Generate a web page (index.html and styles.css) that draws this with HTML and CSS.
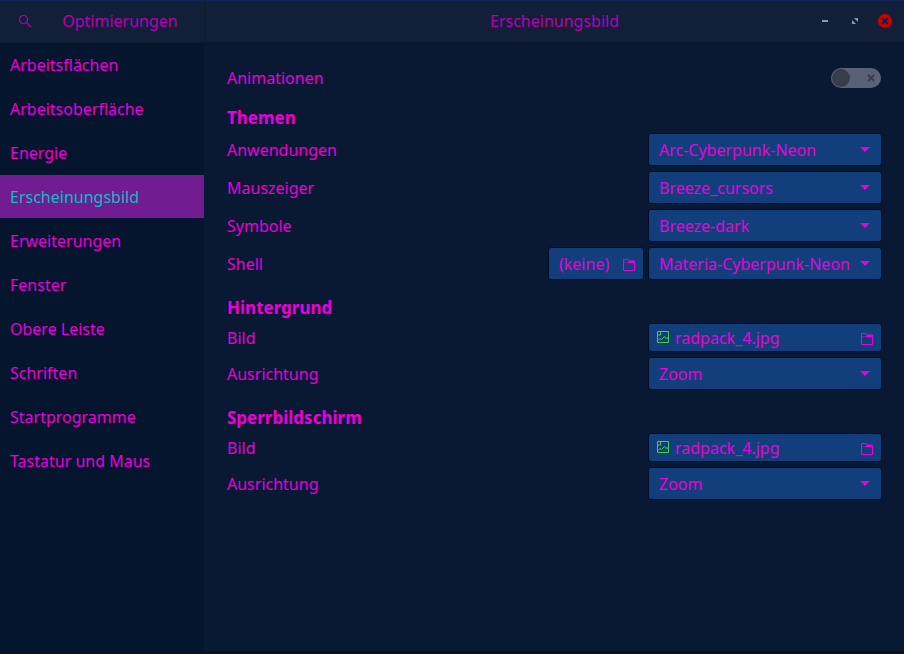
FILE: index.html
```html
<!DOCTYPE html>
<html lang="de">
<head>
    <meta charset="UTF-8">
    <meta name="viewport" content="width=device-width, initial-scale=1.0">
    <title>Optimierungen</title>
    <link rel="stylesheet" href="styles.css">
</head>
<body>
    <!-- Shared icons -->
    <svg class="sprite" aria-hidden="true">
        <symbol id="icon-folder" viewBox="0 0 12 12">
            <path d="M.5 .5H5.2L6.7 2H11.5V11.5H.5Z" fill="none" stroke="currentColor"/>
            <path d="M1 3.5H4.5L6 2H11V4H1Z" fill="currentColor"/>
        </symbol>
        <symbol id="icon-image" viewBox="0 0 12 12">
            <path d="M.5 .5H11.5V11.5H.5Z" fill="none" stroke="currentColor"/>
            <path d="M1 4H3.5V1M1 9.5L3 7.5L4.5 8.5L7.5 5.5L9 7.5L10 6.5L11 8" fill="none" stroke="currentColor"/>
        </symbol>
        <symbol id="icon-arrow" viewBox="0 0 10 5">
            <path d="M0 0H10L5 5Z" fill="currentColor"/>
        </symbol>
    </svg>

    <div class="window">
        <header class="titlebar">
            <div class="titlebar-left">
                <button class="search-button" aria-label="Suchen">
                    <svg width="14" height="14" viewBox="0 0 14 14"><circle cx="5.5" cy="5.5" r="4" fill="none" stroke="currentColor" stroke-width="1.2"/><path d="M8.500 8.500L13 13" fill="none" stroke="currentColor" stroke-width="1.3"/></svg>
                </button>
                <h1 class="title app-title">Optimierungen</h1>
            </div>
            <div class="titlebar-main">
                <h2 class="title">Erscheinungsbild</h2>
                <div class="window-controls">
                    <button aria-label="Minimieren">
                        <svg width="14" height="14" viewBox="0 0 14 14"><path d="M4 6H10V8H4Z" fill="currentColor"/></svg>
                    </button>
                    <button aria-label="Maximieren">
                        <svg width="14" height="14" viewBox="0 0 14 14"><path d="M6 4H10V8ZM4 6L8 10H4Z" fill="currentColor"/></svg>
                    </button>
                    <button class="close" aria-label="Schließen">
                        <svg width="14" height="14" viewBox="0 0 14 14"><path d="M4 4L10 10M10 4L4 10" fill="none" stroke="currentColor" stroke-width="1.8"/></svg>
                    </button>
                </div>
            </div>
        </header>

        <div class="body">
            <nav class="sidebar">
                <a href="#">Arbeitsflächen</a>
                <a href="#">Arbeitsoberfläche</a>
                <a href="#">Energie</a>
                <a href="#" class="active">Erscheinungsbild</a>
                <a href="#">Erweiterungen</a>
                <a href="#">Fenster</a>
                <a href="#">Obere Leiste</a>
                <a href="#">Schriften</a>
                <a href="#">Startprogramme</a>
                <a href="#">Tastatur und Maus</a>
            </nav>

            <main class="content">
                <div class="row">
                    <label for="animations">Animationen</label>
                    <span class="switch">
                        <input type="checkbox" id="animations" role="switch">
                        <svg width="8" height="8" viewBox="0 0 8 8"><path d="M1 1L7 7M7 1L1 7" fill="none" stroke="currentColor" stroke-width="1.8"/></svg>
                    </span>
                </div>

                <h3>Themen</h3>
                <div class="row">
                    <label for="applications">Anwendungen</label>
                    <div class="dropdown">
                        <select id="applications"><option>Arc-Cyberpunk-Neon</option></select>
                        <svg><use href="#icon-arrow"/></svg>
                    </div>
                </div>
                <div class="row">
                    <label for="cursor">Mauszeiger</label>
                    <div class="dropdown">
                        <select id="cursor"><option>Breeze_cursors</option></select>
                        <svg><use href="#icon-arrow"/></svg>
                    </div>
                </div>
                <div class="row">
                    <label for="icons">Symbole</label>
                    <div class="dropdown">
                        <select id="icons"><option>Breeze-dark</option></select>
                        <svg><use href="#icon-arrow"/></svg>
                    </div>
                </div>
                <div class="row">
                    <label for="shell">Shell</label>
                    <button class="file-button small">
                        <span>(keine)</span>
                        <svg><use href="#icon-folder"/></svg>
                    </button>
                    <div class="dropdown">
                        <select id="shell"><option>Materia-Cyberpunk-Neon</option></select>
                        <svg><use href="#icon-arrow"/></svg>
                    </div>
                </div>

                <h3>Hintergrund</h3>
                <div class="row">
                    <label for="background-image">Bild</label>
                    <button class="file-button" id="background-image">
                        <svg class="image-icon"><use href="#icon-image"/></svg>
                        <span>radpack_4.jpg</span>
                        <svg><use href="#icon-folder"/></svg>
                    </button>
                </div>
                <div class="row">
                    <label for="background-mode">Ausrichtung</label>
                    <div class="dropdown">
                        <select id="background-mode"><option>Zoom</option></select>
                        <svg><use href="#icon-arrow"/></svg>
                    </div>
                </div>

                <h3>Sperrbildschirm</h3>
                <div class="row">
                    <label for="lock-image">Bild</label>
                    <button class="file-button" id="lock-image">
                        <svg class="image-icon"><use href="#icon-image"/></svg>
                        <span>radpack_4.jpg</span>
                        <svg><use href="#icon-folder"/></svg>
                    </button>
                </div>
                <div class="row">
                    <label for="lock-mode">Ausrichtung</label>
                    <div class="dropdown">
                        <select id="lock-mode"><option>Zoom</option></select>
                        <svg><use href="#icon-arrow"/></svg>
                    </div>
                </div>
            </main>
        </div>
    </div>
</body>
</html>
```

FILE: styles.css
```css
* {
    box-sizing: border-box;
}
body {
    margin: 0;
    background-color: #091833;
    color: #ea00d9;
    font-family: "Noto Sans", sans-serif;
    font-size: 16px;
    line-height: 24px;
}
button, select {
    font: inherit;
    color: inherit;
}
svg {
    display: block;
    flex-shrink: 0;
}
.sprite {
    display: none;
}
.window {
    display: flex;
    flex-direction: column;
    min-height: 100vh;
    border-bottom: 3px solid #06112a;
}

/* Title bar */
.titlebar {
    display: flex;
    height: 43px;
    background-color: #121f38;
    border-bottom: 1px solid #0b1a2c;
    box-shadow: inset 0 1px #0f2450;
}
.titlebar-left {
    display: flex;
    align-items: center;
    width: 205px;
    padding-left: 18px;
    border-right: 1px solid #0b1a2c;
}
.search-button {
    padding: 0;
    border: none;
    background: none;
    color: #b300af;
}
.title {
    margin: 0;
    font-size: 16px;
    font-weight: normal;
    color: #b900b4;
}
.app-title {
    flex: 1;
    padding-left: 4px;
    text-align: center;
}
.titlebar-main {
    flex: 1;
    display: grid;
    grid-template-columns: 1fr auto 1fr;
    align-items: center;
    padding: 0 12px;
}
.titlebar-main .title {
    grid-column: 2;
}
.window-controls {
    display: flex;
    justify-content: flex-end;
    gap: 16px;
}
.window-controls button {
    padding: 0;
    border: none;
    border-radius: 50%;
    background: none;
    color: #9197a8;
}
.window-controls .close {
    background-color: #cc0000;
    color: #121f38;
}

/* Sidebar */
.body {
    flex: 1;
    display: flex;
}
.sidebar {
    width: 204px;
    background-color: #05152d;
}
.sidebar a {
    display: block;
    padding: 10px 10px 9px;
    border-bottom: 1px solid #05152d;
    color: inherit;
    text-decoration: none;
}
.sidebar .active {
    background-color: #711c91;
    color: #0abdc6;
}

/* Settings */
.content {
    flex: 1;
    padding: 23px 22px 23px 23px;
}
.row {
    display: flex;
    align-items: center;
    gap: 4px;
    margin-bottom: 5px;
}
.row label {
    flex: 1;
}
h3 {
    margin: 16px 0 3px;
    font-size: 17px;
    font-weight: bold;
}
.dropdown {
    position: relative;
    width: 234px;
}
.dropdown select {
    display: block;
    width: 100%;
    height: 33px;
    padding: 0 10px;
    border: 1px solid #030d1e;
    border-radius: 3px;
    background-color: #133e7c;
    appearance: none;
}
.dropdown svg {
    position: absolute;
    top: 14px;
    right: 12px;
    width: 10px;
    height: 5px;
    pointer-events: none;
}
.file-button {
    display: flex;
    align-items: center;
    justify-content: space-between;
    gap: 6px;
    width: 234px;
    height: 29px;
    padding: 0 8px;
    border: 1px solid #030d1e;
    border-radius: 3px;
    background-color: #133e7c;
}
.file-button.small {
    width: 96px;
    height: 33px;
    padding-left: 10px;
}
.file-button svg {
    width: 12px;
    height: 12px;
    margin-top: 2px;
}
.file-button .image-icon {
    margin: 0 0 2px;
    color: #4bc94b;
}
.image-icon + span {
    flex: 1;
    text-align: left;
}
.switch {
    position: relative;
    margin-right: 1px;
}
.switch input {
    display: block;
    width: 50px;
    height: 20px;
    margin: 0;
    padding: 1px;
    border-radius: 10px;
    background-color: #5a607a;
    appearance: none;
}
.switch input::before {
    content: "";
    display: block;
    width: 18px;
    height: 18px;
    border-radius: 50%;
    background-color: #383d49;
}
.switch svg {
    position: absolute;
    top: 6px;
    right: 6px;
    color: #383d49;
    pointer-events: none;
}
```
